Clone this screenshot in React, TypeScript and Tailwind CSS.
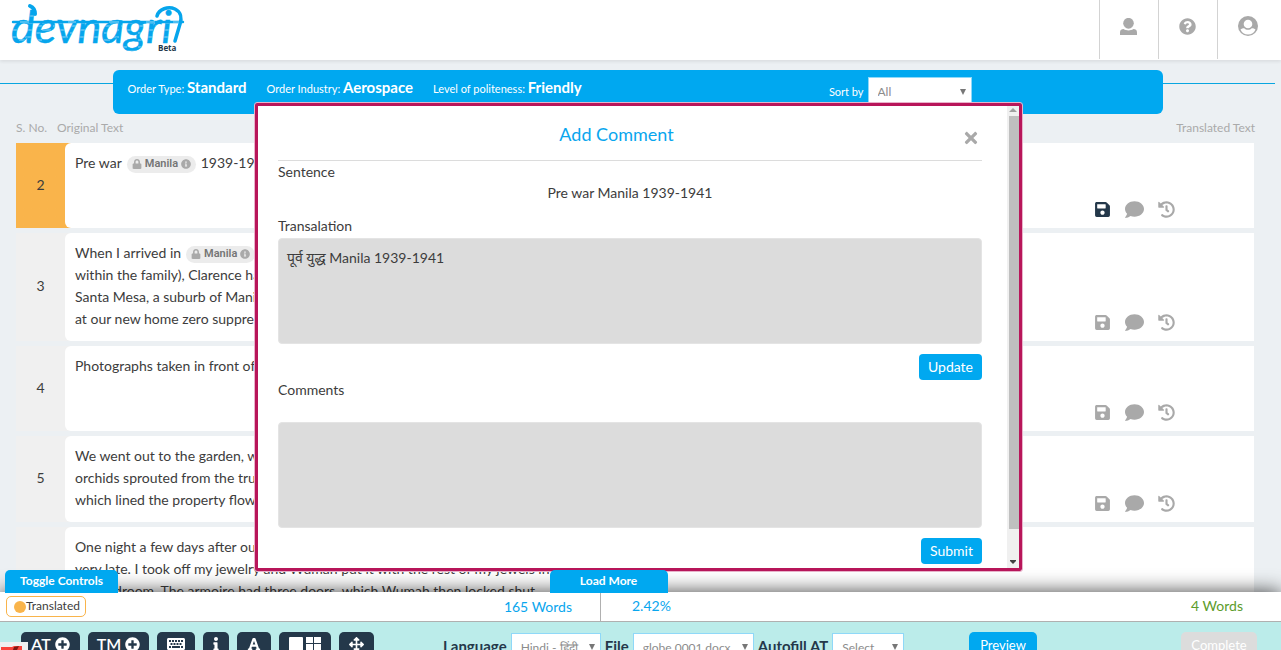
import React, { type ReactNode } from "react";
import {
  FaArrowsAlt,
  FaComment,
  FaFont,
  FaHistory,
  FaInfo,
  FaInfoCircle,
  FaKeyboard,
  FaLock,
  FaPlusCircle,
  FaQuestionCircle,
  FaSave,
  FaTimes,
} from "react-icons/fa";

function Logo() {
  return (
    <svg width="180" height="56" viewBox="0 0 180 56" className="overflow-visible" role="img" aria-label="devnagri Beta">
      <defs>
        <pattern id="brush" width="17" height="7" patternUnits="userSpaceOnUse">
          <rect width="17" height="7" fill="#06a5ec" />
          <path d="M0 2h9M11 5h6" stroke="#8fd8f8" strokeWidth="1" />
        </pattern>
      </defs>
      <text x="3" y="43" fill="url(#brush)" stroke="#06a5ec" strokeWidth="0.5" fontSize="45" className="font-['Lato'] italic">
        devnagri
      </text>
      <g fill="none" stroke="#06a5ec" strokeLinecap="round">
        <path d="M5 22H175" strokeWidth="2.4" />
        <path d="M22 6q5 2 5 8" strokeWidth="4" />
        <path d="M149 16c2-7 11-10 18-7 6 3 7 9 5 15l-5 17" strokeWidth="3.5" />
      </g>
      <path d="M12 22h9M60 22h8M101 22h10M138 22h9M165 22h6" stroke="#8fd8f8" />
      <text x="150" y="51" fill="#24384a" fontSize="8" className="font-['Open_Sans'] font-bold">
        Beta
      </text>
    </svg>
  );
}

function UserIcon() {
  return (
    <svg width="17" height="17" viewBox="0 0 17 17" fill="#a9a9a9" aria-hidden="true">
      <ellipse cx="8.5" cy="5.3" rx="5.3" ry="5.4" />
      <path d="M0 17v-2.6C0 12 1.6 11 3.6 11c1.6 1 3 1.4 4.9 1.4s3.3-.4 4.9-1.4C15.4 11 17 12 17 14.4V17z" />
    </svg>
  );
}

function AccountIcon() {
  return (
    <svg width="20" height="20" viewBox="0 0 20 20" aria-hidden="true">
      <circle cx="10" cy="10" r="10" fill="#a9a9a9" />
      <circle cx="10" cy="8" r="4.3" fill="#fff" />
      <path d="M2.5 13.5c1-.9 2.3-1.3 3.8-1.3 1 1 2.2 1.5 3.7 1.5s2.7-.5 3.7-1.5c1.5 0 2.800.4 3.800 1.300A8.400 8.400 0 0 1 10 18.600a8.400 8.400 0 0 1-7.500-5.100z" fill="#fff" />
    </svg>
  );
}

function PanelsIcon() {
  return (
    <svg width="32" height="14" viewBox="0 0 32 14" fill="#fff" aria-hidden="true">
      <rect width="14" height="14" rx="1" />
      <rect x="17" width="7" height="6" />
      <rect x="25" width="7" height="6" />
      <rect x="17" y="7" width="7" height="7" />
      <rect x="25" y="7" width="7" height="7" />
    </svg>
  );
}

function Term() {
  return (
    <span className="mr-px ml-[5px] inline-flex h-[17px] items-center gap-[3px] rounded-full bg-[#ececec] px-[5px] align-middle font-['Roboto'] text-[11px] font-semibold text-[#757575]">
      <FaLock size={10} className="text-[#a9a9a9]" />
      Manila
      <FaInfoCircle size={10} className="text-[#a9a9a9]" />
    </span>
  );
}

function Row({ number, active, children }: { number?: string; active?: boolean; children: ReactNode }) {
  return (
    <div className={active ? "flex bg-linear-to-r from-[#f9b44b] from-10% to-transparent to-10%" : "flex bg-linear-to-r from-[#f0f0f0] from-10% to-transparent to-10%"}>
      <div className="flex w-[49px] shrink-0 items-center justify-center pb-[3px] text-[14px]">{number}</div>
      <div className="flex min-h-[85px] flex-1 items-end justify-between rounded-l-md bg-white">
        <p className="self-stretch pt-[9px] pb-[11px] pl-2.5 text-[14px] leading-[22px] whitespace-nowrap">{children}</p>
        <div className="flex items-center gap-3.5 pr-[79px] pb-[9px] text-[#a9a9a9]">
          <button type="button" aria-label="Save" className={active ? "text-[#24384a]" : ""}>
            <FaSave size={17} />
          </button>
          <button type="button" aria-label="Comment">
            <FaComment size={19} />
          </button>
          <button type="button" aria-label="History">
            <FaHistory size={17} />
          </button>
        </div>
      </div>
    </div>
  );
}

function Select({ id, value, className }: { id: string; value: string; className: string }) {
  return (
    <span className="relative">
      <select
        id={id}
        className={"h-[30px] appearance-none border border-[#8fd8f8] bg-white pl-[9px] font-['Lato'] text-[12px] font-normal text-[#8c8c8c] " + className}
      >
        <option>{value}</option>
      </select>
      <svg className="pointer-events-none absolute top-3 right-1.5" width="6" height="6" viewBox="0 0 6 6" fill="#777" aria-hidden="true">
        <path d="M0 0h6L3 6z" />
      </svg>
    </span>
  );
}

function Tool({ label, className, children }: { label: string; className: string; children: ReactNode }) {
  return (
    <button
      type="button"
      aria-label={label}
      className={"flex h-6 shrink-0 items-center justify-center gap-1 rounded-[5px] bg-[#24384a] text-[16px] font-semibold text-white " + className}
    >
      {children}
    </button>
  );
}

function CommentDialog() {
  return (
    <section
      role="dialog"
      aria-label="Add Comment"
      className="absolute top-[103px] right-1 left-0 mx-auto flex w-[60%] max-w-[767px] rounded-xs border-3 border-[#b8165a] bg-white outline outline-[#e9b3cb]"
    >
      <div className="flex-1 pt-[15px] pr-[25px] pb-1 pl-[20px] text-[14px]">
        <div className="flex items-center border-b border-[#dcdcdc] pb-[13px]">
          <h2 className="flex-1 text-center text-[18px] leading-[26px] text-[#09a6ee]">Add Comment</h2>
          <button type="button" aria-label="Close" className="mt-2 w-[27px] pl-[7px] text-[#a9a9a9]">
            <FaTimes size={18} />
          </button>
        </div>
        <h3 className="leading-[21px]">Sentence</h3>
        <p className="text-center leading-[22px]">Pre war Manila 1939-1941</p>
        <label htmlFor="translation" className="mt-[11px] mb-px block leading-[22px]">
          Transalation
        </label>
        <textarea
          id="translation"
          defaultValue="पूर्व युद्ध Manila 1939-1941"
          className="block h-[106px] w-full resize-none rounded-sm border border-[#e4e4e4] bg-[#dcdcdc] px-2 py-2 leading-[22px]"
        />
        <div className="mt-2.5 flex justify-end">
          <button type="button" className="h-[26px] rounded-sm bg-[#00a8f0] px-[9px] pb-0.5 text-[14px] text-white">
            Update
          </button>
        </div>
        <label htmlFor="comments" className="mb-[22px] block leading-5">
          Comments
        </label>
        <textarea id="comments" className="block h-[106px] w-full resize-none rounded-sm border border-[#e4e4e4] bg-[#dcdcdc] px-2 py-2" />
        <div className="mt-2.5 flex justify-end">
          <button type="button" className="h-[26px] rounded-sm bg-[#00a8f0] px-[9px] pb-0.5 text-[14px] text-white">
            Submit
          </button>
        </div>
      </div>
      <div className="flex w-3 flex-col items-center bg-[#f0f0f0]" aria-hidden="true">
        <svg width="8" height="10" viewBox="0 0 8 10" fill="#a0a0a0">
          <path d="M4 2l4 4H0z" />
        </svg>
        <div className="ml-0.5 w-2.5 flex-1 bg-[#bfbfbf]" />
        <svg width="6" height="39" viewBox="0 0 6 39" fill="#404040">
          <path d="M0 31h6v1L3 35 0 32z" />
        </svg>
      </div>
    </section>
  );
}

export default function App() {
  return (
    <div className="relative flex h-screen flex-col overflow-hidden bg-[#ecf0f3] font-['Lato','Noto_Sans',sans-serif] text-[#3c3c3c]">
      <header className="z-10 flex h-[60px] shrink-0 justify-between bg-white pl-2 shadow-[0_2px_3px_rgba(0,0,0,0.07)]">
        <Logo />
        <nav className="flex h-[59px] text-[#a9a9a9]">
          <button type="button" aria-label="User" className="flex w-[59px] justify-center border-l border-[#d3d3d3] pt-[18px] pr-0.5">
            <UserIcon />
          </button>
          <button type="button" aria-label="Help" className="flex w-[59px] justify-center border-l border-[#d3d3d3] pt-[18px] pr-0.5">
            <FaQuestionCircle size={17} />
          </button>
          <button type="button" aria-label="Account" className="flex w-16 justify-center border-l border-[#d3d3d3] pt-4 pr-1">
            <AccountIcon />
          </button>
        </nav>
      </header>

      <main className="min-h-0 flex-1 overflow-hidden pt-2.5">
        <div className="flex pr-1.5">
          <div className="h-3.5 flex-1 border-b border-[#09a6e0]" />
          <div className="flex h-11 w-[83%] max-w-[1050px] justify-between rounded-md bg-[#00a8f0] pl-[15px] text-[11px] text-white">
            <div className="flex gap-5 pt-[7px] leading-5">
              <span>
                Order Type: <b className="text-[15px] font-bold">Standard</b>
              </span>
              <span>
                Order Industry: <b className="text-[15px] font-bold">Aerospace</b>
              </span>
              <span>
                Level of politeness: <b className="text-[15px] font-bold">Friendly</b>
              </span>
            </div>
            <div className="flex gap-1 pt-[7px] pr-[191px]">
              <label htmlFor="sort" className="pt-[7px]">
                Sort by
              </label>
              <Select id="sort" value="All" className="w-[104px]" />
            </div>
          </div>
          <div className="h-3.5 flex-1 border-b border-[#09a6e0]" />
        </div>

        <div className="flex pt-[5px] pr-[26px] pb-[7px] pl-4 text-[12px] leading-[17px] text-[#aaa]">
          <span className="w-[41px]">S. No.</span>
          <span className="flex-1">Original Text</span>
          <span>Translated Text</span>
        </div>

        <div className="flex flex-col gap-[5px] pr-[27px] pl-4">
          <Row number="2" active>
            Pre war
            <Term /> 1939-1941
          </Row>
          <Row number="3">
            When I arrived in
            <Term />
            <br />
            within the family), Clarence had
            <br />
            Santa Mesa, a suburb of Manila
            <br />
            at our new home zero suppress
          </Row>
          <Row number="4">Photographs taken in front of</Row>
          <Row number="5">
            We went out to the garden, w
            <br />
            orchids sprouted from the trunk
            <br />
            which lined the property flow
          </Row>
          <Row>
            One night a few days after our
            <br />
            very late. I took off my jewelry and Wumah put it with the rest of my jewels in
            <br />
            the bedroom. The armoire had three doors, which Wumah then locked shut.
            <br />
            <br />
            <br />
          </Row>
        </div>
      </main>

      <CommentDialog />

      <footer className="relative h-[58px] shrink-0">
        <div className="h-[58px] overflow-hidden bg-[#bbecea] shadow-[0_0_20px_rgba(0,0,0,0.75)]">
          <div className="grid h-[30px] grid-cols-[601fr_680fr] border-b border-[#b0b0b0] bg-white text-[14px] text-[#09a6ee]">
            <div className="flex items-center justify-between border-r border-[#b0b0b0] pr-7 pb-px pl-1.5">
              <span className="flex h-[21px] items-center rounded-[5px] border border-[#f9b44b] pr-[5px] pb-px pl-[7px] text-[12px] text-[#3c3c3c]">
                <i className="mt-[3px] size-3 rounded-full bg-[#f9b44b]" />
                Translated
              </span>
              165 Words
            </div>
            <div className="flex items-center justify-between pr-[38px] pb-0.5 pl-[31px]">
              2.42%
              <span className="text-[#5c9c2b]">4 Words</span>
            </div>
          </div>
          <div className="grid grid-cols-[443fr_526fr_312fr] pt-2.5">
            <div className="flex gap-2 pl-[21px]">
              <Tool label="AT" className="w-[59px]">
                AT <FaPlusCircle size={15} />
              </Tool>
              <Tool label="TM" className="w-[61px]">
                TM <FaPlusCircle size={15} />
              </Tool>
              <Tool label="Keyboard" className="w-[38px]">
                <FaKeyboard size={18} />
              </Tool>
              <Tool label="Information" className="w-[26px]">
                <FaInfo size={14} />
              </Tool>
              <Tool label="Font" className="w-[34px]">
                <FaFont size={14} />
              </Tool>
              <Tool label="Panels" className="w-[52px]">
                <PanelsIcon />
              </Tool>
              <Tool label="Move" className="w-[35px]">
                <FaArrowsAlt size={15} />
              </Tool>
            </div>
            <div className="flex gap-1 text-[15px] leading-7 font-bold text-[#24384a]">
              <label htmlFor="language">Language</label>
              <Select id="language" value="Hindi - हिंदी" className="w-[90px]" />
              <label htmlFor="file">File</label>
              <Select id="file" value="globe 0001.docx" className="w-[121px]" />
              <label htmlFor="autofill">Autofill AT</label>
              <Select id="autofill" value="Select" className="w-[72px]" />
            </div>
            <div className="flex items-start justify-between pr-6 text-[13px] text-white">
              <button type="button" className="h-7 w-[68px] rounded-[5px] bg-[#00a8f0]">
                Preview
              </button>
              <button type="button" className="h-7 w-[76px] rounded-[5px] bg-[#dcdcdc]">
                Complete
              </button>
            </div>
          </div>
        </div>
        <button type="button" className="absolute -top-[22px] left-[5px] h-[23px] w-[113px] rounded-t-[5px] bg-[#00a8f0] pb-0.5 text-[12px] font-bold text-white">
          Toggle Controls
        </button>
        <button type="button" className="absolute -top-[22px] left-[42.9%] h-[23px] w-[118px] rounded-t-[5px] bg-[#00a8f0] pb-0.5 text-[12px] font-bold text-white">
          Load More
        </button>
        <div className="absolute bottom-0 left-0 h-2 w-7 overflow-hidden bg-[#f0f0f0]">
          <svg width="28" height="8" viewBox="0 0 28 8" aria-hidden="true">
            <path d="M1 5h11l2-1h8v4H1z" fill="#f9423a" />
            <path d="M14 5l5-1-2 4h-4z" fill="#7d1712" />
          </svg>
        </div>
      </footer>
    </div>
  );
}
